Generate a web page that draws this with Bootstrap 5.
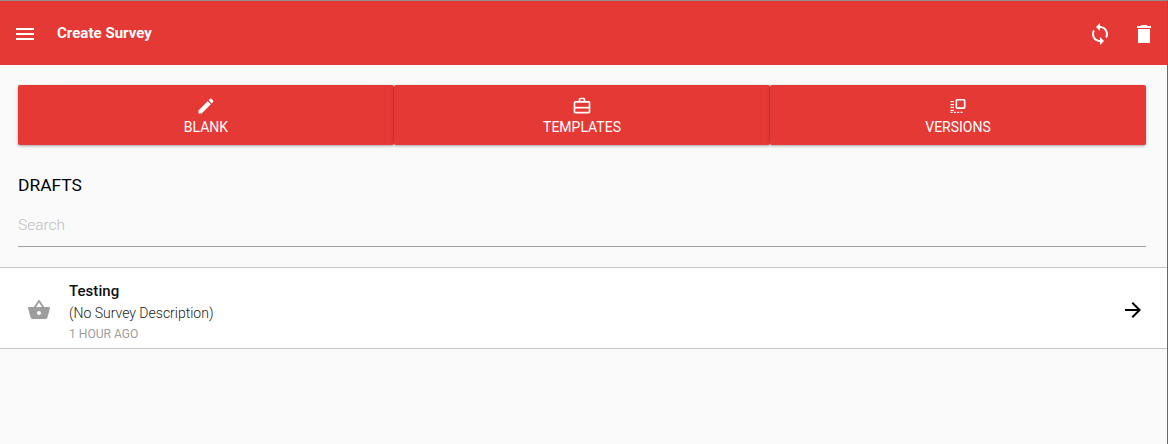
<!DOCTYPE html>
<html lang="en">
<head>
<meta charset="utf-8">
<title>Create Survey</title>
<link href="https://cdn.jsdelivr.net/npm/bootstrap@5.3.0/dist/css/bootstrap.min.css" rel="stylesheet">
<style>
html,body{height:444px;overflow:hidden}
body{background:#fafafa;font-family:Roboto,sans-serif;color:#000;border-top:1px solid #8f8f8f;border-right:1px solid #4f6f7f}
.top-bar{height:64px;background:#e53935;color:#fff;padding:1px 11px 0 13px}
.top-title{font-size:15px;font-weight:700;margin-left:20px;letter-spacing:.03px}
.icon-gap{gap:20px}
.ico{fill:currentColor;display:block;flex:none}
.action-row{padding:20px 21px 0 18px}
.action-btn{flex:1 1 0;height:60px;background:#e53935;color:#fff;border:0;border-radius:2px;box-shadow:0 1px 3px rgba(0,0,0,.35);font-size:14px;line-height:16px;padding:0;font-family:Roboto,sans-serif}
.action-btn:hover,.action-btn:active{background:#e53935!important;color:#fff!important}
.action-btn .ico{margin:0 auto 3px}
.drafts-head{font-size:17.4px;font-weight:400;margin:30px 0 0;padding-left:18px;line-height:20px}
.search-wrap{margin:15px 21px 0 18px;border-bottom:1px solid #9e9e9e;height:37px}
.search-input{border:0;background:transparent;outline:0;width:100%;padding:0;font-size:15.5px;line-height:30px;height:30px;font-family:Roboto,sans-serif;font-weight:300}
.search-input::placeholder{color:#bdbdbd;opacity:1}
.draft-row{margin-top:20px;background:#fff;border-top:1px solid #c8c8c8;border-bottom:1px solid #c8c8c8;height:82px;padding:0 22px 0 27px}
.draft-title{font-size:15px;font-weight:500;line-height:22px;color:#111;letter-spacing:.05px}
.draft-desc{font-size:14px;font-weight:300;line-height:22px;color:#222}
.draft-time{font-size:12.1px;line-height:18px;color:#9e9e9e;margin-top:1px}
.draft-text{margin-left:18px;padding-top:7px}
.row-ico{margin-top:4px}
.basket{color:#9e9e9e}
</style>
</head>
<body>
<header class="top-bar d-flex align-items-center">
  <svg class="ico" width="24" height="24" viewBox="0 0 24 24"><path d="M3 18h18v-2H3v2zm0-5h18v-2H3v2zm0-7v2h18V6H3z"/></svg>
  <span class="top-title">Create Survey</span>
  <div class="ms-auto d-flex align-items-center icon-gap">
    <svg class="ico" width="24" height="24" viewBox="0 0 24 24"><path d="M12 4V1L8 5l4 4V6c3.31 0 6 2.69 6 6 0 1.01-.25 1.97-.7 2.8l1.46 1.46C19.54 15.03 20 13.57 20 12c0-4.42-3.58-8-8-8zm0 14c-3.31 0-6-2.69-6-6 0-1.01.25-1.97.7-2.8L5.24 7.74C4.46 8.97 4 10.43 4 12c0 4.42 3.58 8 8 8v3l4-4-4-4v3z"/></svg>
    <svg class="ico" width="24" height="24" viewBox="0 0 24 24"><path d="M6 20c0 .6.4 1 1 1h10c.6 0 1-.4 1-1V7H6v13zM19 4h-3.500l-1-1h-5l-1 1H5v2h14V4z"/></svg>
  </div>
</header>
<div class="action-row d-flex">
  <button type="button" class="btn action-btn">
    <svg class="ico" width="20" height="20" viewBox="0 0 24 24"><path d="M3 17.25V21h3.75L17.81 9.94l-3.75-3.75L3 17.25zM20.71 7.04c.39-.39.39-1.02 0-1.41l-2.34-2.34c-.39-.39-1.02-.39-1.41 0l-1.83 1.83 3.75 3.75 1.83-1.83z"/></svg>
    BLANK
  </button>
  <button type="button" class="btn action-btn">
    <svg class="ico" width="20" height="20" viewBox="0 0 24 24"><path d="M14 6V4h-4v2h4zM4 8v11h16V8H4zm16-2c1.11 0 2 .89 2 2v11c0 1.11-.89 2-2 2H4c-1.11 0-2-.89-2-2l.01-11c0-1.11.88-2 1.99-2h4V4c0-1.11.89-2 2-2h4c1.11 0 2 .89 2 2v2h4z"/><path d="M3 13h18v2H3z"/></svg>
    TEMPLATES
  </button>
  <button type="button" class="btn action-btn">
    <svg class="ico" width="20" height="20" viewBox="0 0 24 24"><path d="M11 3.5h8a2 2 0 0 1 2 2v8a2 2 0 0 1-2 2h-8a2 2 0 0 1-2-2v-8a2 2 0 0 1 2-2zm0 2v8h8v-8h-8z"/><path d="M3 6h4v1.5H3zM3 9.500h4V11H3zM3 13h4v1.500H3zM3 16.500h4V18H3zM3 19h2.500v1.500H3zM7 19h2.500v1.500H7zM11 19h2.500v1.500H11zM15 19h2.500v1.500H15z"/></svg>
    VERSIONS
  </button>
</div>
<h2 class="drafts-head">DRAFTS</h2>
<div class="search-wrap"><input class="search-input" type="text" placeholder="Search" aria-label="Search"></div>
<div class="draft-row d-flex align-items-center">
  <svg class="ico basket row-ico" width="24" height="24" viewBox="0 0 24 24"><path d="M17.21 9l-4.38-6.56c-.19-.28-.51-.42-.83-.42-.32 0-.64.14-.83.43L6.79 9H2c-.55 0-1 .45-1 1 0 .09.01.18.04.27l2.54 9.27c.23.84 1 1.46 1.92 1.46h13c.92 0 1.69-.62 1.93-1.46l2.54-9.27L23 10c0-.55-.45-1-1-1h-4.79zM9 9l3-4.4L15 9H9zm3 8c-1.1 0-2-.9-2-2s.9-2 2-2 2 .9 2 2-.9 2-2 2z"/></svg>
  <div class="draft-text">
    <div class="draft-title">Testing</div>
    <div class="draft-desc">(No Survey Description)</div>
    <div class="draft-time">1 HOUR AGO</div>
  </div>
  <svg class="ico ms-auto row-ico" width="24" height="24" viewBox="0 0 24 24"><path d="M12 4l-1.41 1.41L16.17 11H4v2h12.17l-5.58 5.59L12 20l8-8z"/></svg>
</div>
</body>
</html>
